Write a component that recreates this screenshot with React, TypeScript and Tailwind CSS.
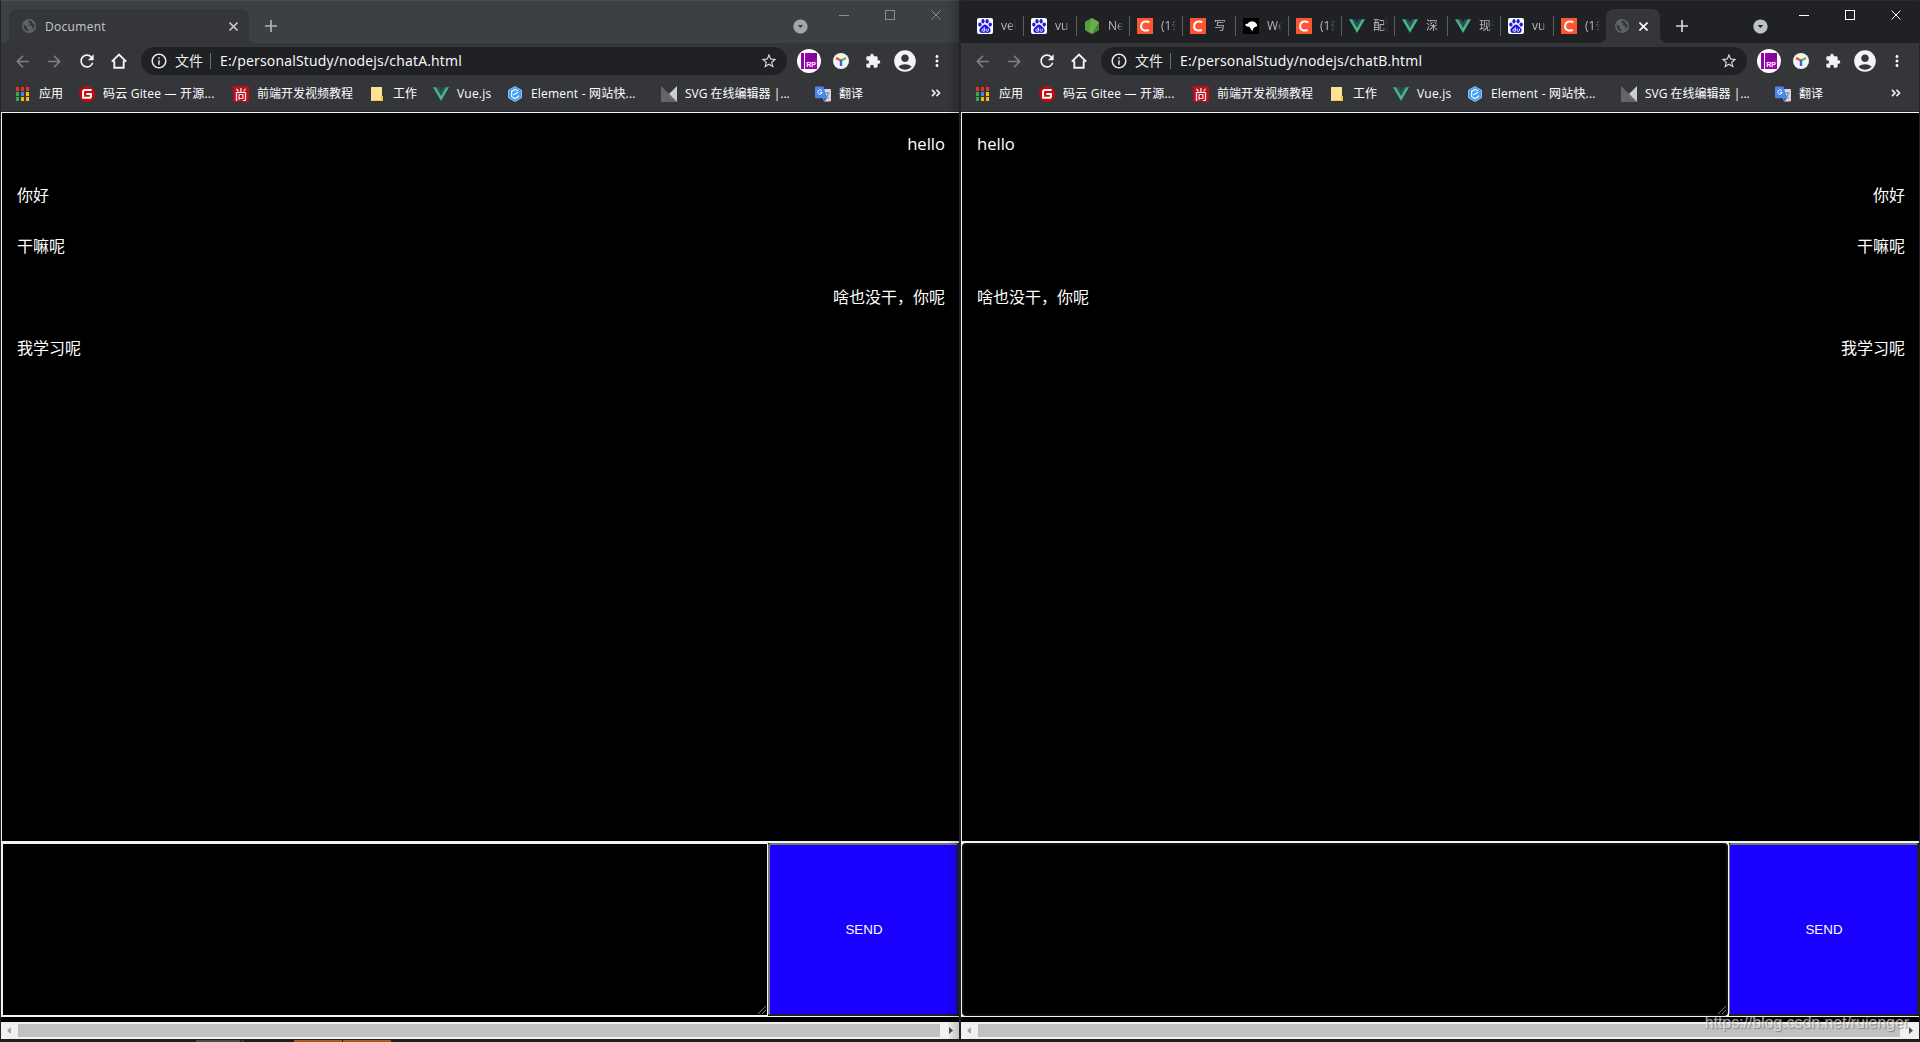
import type { ReactNode } from "react"
import {
  MdAccountCircle,
  MdArrowBack,
  MdArrowDropDownCircle,
  MdArrowForward,
  MdExtension,
  MdInfoOutline,
  MdMoreVert,
  MdRefresh,
  MdStarBorder,
} from "react-icons/md"

type Message = { text: string; from: "A" | "B" }

const messages: Message[] = [
  { text: "hello", from: "A" },
  { text: "你好", from: "B" },
  { text: "干嘛呢", from: "B" },
  { text: "啥也没干，你呢", from: "A" },
  { text: "我学习呢", from: "B" },
]

/* ---------- Icons ---------- */

function GlobeIcon() {
  return (
    <svg viewBox="0 0 14 14" className="w-3.5 h-3.5 shrink-0">
      <circle cx="7" cy="7" r="7" fill="#5f6368" />
      <path d="M1.600 5.500 4 7l1.200 1-.4 1.800 2 .7-.6 1.800C3.500 12 1.500 9.500 1.600 5.500zM7 1.800l-.6 1.500 1.600.9L7.500 6l2 .8 1.200 1.700L9.300 10.800l3-2.400.2-3.200L10.300 4 9.500 2z" fill="#35363a" />
    </svg>
  )
}

function AppsIcon() {
  const colors = ["#ee3124", "#ee3124", "#ee3124", "#35a853", "#4285f4", "#fbbc05", "#35a853", "#fbbc05", "#fbbc05"]
  return (
    <svg viewBox="0 0 16 16" className="w-4 h-4 shrink-0">
      {colors.map((c, i) => (
        <rect key={i} x={1 + (i % 3) * 5} y={1 + Math.floor(i / 3) * 5} width="3" height="4" fill={c} />
      ))}
    </svg>
  )
}

function GiteeIcon() {
  return (
    <svg viewBox="0 0 16 16" className="w-4 h-4 shrink-0">
      <circle cx="8" cy="8" r="8" fill="#c9060b" />
      <path d="M12.500 4.100H6a1.900 1.900 0 0 0-1.900 1.900v5.800H10a1.900 1.900 0 0 0 1.900-1.900V8H7.300" fill="none" stroke="#fff" strokeWidth="2" />
    </svg>
  )
}

function ShangIcon() {
  return (
    <span className="flex w-4 h-4 shrink-0 items-center justify-center bg-[#b8101c] text-[13px] leading-none text-white">尚</span>
  )
}

function FolderIcon() {
  return (
    <svg viewBox="0 0 16 16" className="w-4 h-4 shrink-0">
      <path d="M2 1h11v9h1v5H2z" fill="#fde293" />
      <path d="M2 14h10v1H2zM12 10h2v5h-2z" fill="#f0c64a" />
    </svg>
  )
}

function VueIcon() {
  return (
    <svg viewBox="0 0 16 16" className="w-4 h-4 shrink-0">
      <path d="M0 1.200h3.200L8 9.500l4.800-8.300H16L8 15z" fill="#41b883" />
      <path d="M3.200 1.200h3L8 4.300l1.800-3.100h3L8 9.500z" fill="#35495e" />
    </svg>
  )
}

function ElementIcon() {
  return (
    <svg viewBox="0 0 16 16" className="w-4 h-4 shrink-0">
      <path d="M8 .5 14.500 4.200v7.600L8 15.500 1.500 11.800V4.200z" fill="#409eff" stroke="#a9d3ff" strokeWidth=".8" />
      <path d="M11.300 5 8.200 3.300 4.600 5.400v5.200L8 12.600l3.500-2V9.200" fill="none" stroke="#fff" strokeWidth="1.100" />
      <path d="M6.200 8.900 11.400 6" stroke="#fff" strokeWidth="1.200" />
    </svg>
  )
}

function SvgEditorIcon() {
  return (
    <svg viewBox="0 0 16 16" className="w-4 h-4 shrink-0">
      <path d="M0 0l16 16H0z" fill="#666" />
      <path d="M16 0v16L8 8z" fill="#ccc" />
    </svg>
  )
}

function TranslateIcon() {
  return (
    <svg viewBox="0 0 16 16" className="w-4 h-4 shrink-0">
      <path d="M6 3h9a1 1 0 0 1 1 1v10.500a1 1 0 0 1-1 1H9z" fill="#d5d8dc" />
      <path d="M9.500 7h5M12 6v1m1.500 0c-.5 2.500-2 4.500-3.500 5.500M10.500 8.500c.7 1.700 2 3 3.500 4" stroke="#607d8b" strokeWidth=".9" fill="none" />
      <path d="M1 .5h7.500l3.500 11.800H1a1 1 0 0 1-1-1V1.500a1 1 0 0 1 1-1z" fill="#4a86f0" />
      <path d="M8.500 12.300H12L9.500 15.500z" fill="#2f5fc4" />
      <path d="M6.800 4.700a2.200 2.200 0 1 0 .4 1.700H5.200" stroke="#fff" strokeWidth="1" fill="none" />
    </svg>
  )
}

function BaiduIcon() {
  return (
    <svg viewBox="0 0 16 16" className="w-4 h-4 shrink-0">
      <rect width="16" height="16" rx="2" fill="#fff" />
      <g fill="#2319dc">
        <ellipse cx="2.900" cy="6.600" rx="1.700" ry="2.100" />
        <ellipse cx="6" cy="3.200" rx="1.600" ry="2.200" />
        <ellipse cx="10.100" cy="3.200" rx="1.600" ry="2.200" />
        <ellipse cx="13.200" cy="6.600" rx="1.700" ry="2.100" />
        <path d="M8 6.500c1.800 0 2.500 1.500 3.700 2.600 1.400 1.300 2.100 2.300 1.900 3.700-.2 1.700-1.600 2.300-3 2.200-1-.1-1.700-.3-2.600-.3s-1.600.2-2.600.3c-1.400.1-2.800-.5-3-2.200-.2-1.400.5-2.400 1.900-3.700C5.500 8 6.200 6.500 8 6.500z" />
      </g>
      <path d="M7.300 9.200v4.300M7.300 11.800a1.200 1.200 0 1 0 0 .8M9.200 10.700v1.900q0 .7 1 .7t1.200-.7v-1.900" fill="none" stroke="#fff" strokeWidth=".9" />
    </svg>
  )
}

function CsdnIcon() {
  return (
    <svg viewBox="0 0 16 16" className="w-4 h-4 shrink-0">
      <path d="M0 0h16v16H0z" fill="#fc5531" />
      <path d="M12.300 4.300C9.500 2.700 4.600 3 4.100 7.900c-.4 4.500 4 5.500 7.600 4.100" fill="none" stroke="#fff" strokeWidth="2" />
    </svg>
  )
}

function NodeIcon() {
  return (
    <svg viewBox="0 0 16 16" className="w-4 h-4 shrink-0">
      <path d="M8 0l7 4v8l-7 4-7-4V4z" fill="#6cae4a" />
      <path d="M1 4l5 11-5-3zM8 0 1 4l4 8z" fill="#539e43" />
      <path d="M15 4v8l-7 4z" fill="#3e863d" />
    </svg>
  )
}

function BirdIcon() {
  return (
    <svg viewBox="0 0 16 16" className="w-4 h-4 shrink-0">
      <path d="M0 0h16v16H0z" fill="#000" />
      <path d="M2 7c1-1 2-1.300 3-1.500C6 3.500 9 3 11.500 4c2 .8 2.500 2.500 2.800 4L12.500 8.800 10.500 10l-.8 3L8 11.500 6.500 8.800 4 8.500z" fill="#fff" />
    </svg>
  )
}

function HomeIcon() {
  return (
    <svg viewBox="0 0 16 16" className="w-4 h-4 shrink-0">
      <path d="M.8 8.600 8 1.600l7.200 7M3.300 7.500v7.300h9.400V7.500" fill="none" stroke="#f1f3f4" strokeWidth="1.900" />
    </svg>
  )
}

function AxureIcon() {
  return (
    <svg viewBox="0 0 24 24" className="w-6 h-6 shrink-0">
      <circle cx="12" cy="12" r="12" fill="#fff" />
      <path d="M4 4h3v16H4z" fill="#8a0aa0" />
      <path d="M8 4h12v16H8z" fill="#a400b8" />
      <path d="M8 10l7-6h5v5l-6 3z" fill="#7d0a96" />
      <text x="9.300" y="18.300" fontSize="7" fontWeight="700" fill="#fff" fontFamily="Liberation Sans, sans-serif">RP</text>
    </svg>
  )
}

function YIcon() {
  return (
    <svg viewBox="0 0 16 16" className="w-4 h-4 shrink-0">
      <circle cx="8" cy="8" r="8" fill="#f4f4f4" />
      <path d="M8 7.500 3 5" stroke="#ff4a12" strokeWidth="2.400" />
      <path d="M8 7.500 13 5" stroke="#5ac62c" strokeWidth="2.400" />
      <path d="M8 7v6" stroke="#2c5fff" strokeWidth="2.400" />
    </svg>
  )
}

function Cross({ className, size, width = 1 }: { className: string; size: number; width?: number }) {
  return (
    <svg viewBox="0 0 10 10" width={size} height={size} className={`shrink-0 ${className}`}>
      <path d="M.5 .5l9 9M9.500 .5l-9 9" stroke="currentColor" strokeWidth={width} />
    </svg>
  )
}

/* ---------- Data ---------- */

const bookmarks: { label: string; icon: ReactNode; width: string }[] = [
  { label: "应用", icon: <AppsIcon />, width: "w-16" },
  { label: "码云 Gitee — 开源...", icon: <GiteeIcon />, width: "w-[154px] tracking-[0.2px]" },
  { label: "前端开发视频教程", icon: <ShangIcon />, width: "w-[136px]" },
  { label: "工作", icon: <FolderIcon />, width: "w-16" },
  { label: "Vue.js", icon: <VueIcon />, width: "w-[74px] tracking-[0.2px]" },
  { label: "Element - 网站快...", icon: <ElementIcon />, width: "w-[154px] tracking-[0.2px]" },
  { label: "SVG 在线编辑器 |...", icon: <SvgEditorIcon />, width: "w-[154px]" },
  { label: "翻译", icon: <TranslateIcon />, width: "w-[60px]" },
]

const backgroundTabs = [
  { title: "vel", icon: <BaiduIcon /> },
  { title: "vu", icon: <BaiduIcon /> },
  { title: "Ne", icon: <NodeIcon /> },
  { title: "(1条", icon: <CsdnIcon /> },
  { title: "写", icon: <CsdnIcon /> },
  { title: "We", icon: <BirdIcon /> },
  { title: "(1条", icon: <CsdnIcon /> },
  { title: "配置", icon: <VueIcon /> },
  { title: "深", icon: <VueIcon /> },
  { title: "现有", icon: <VueIcon /> },
  { title: "vu", icon: <BaiduIcon /> },
  { title: "(1条", icon: <CsdnIcon /> },
]

/* ---------- Browser chrome ---------- */

function ActiveTab({ title }: { title?: string }) {
  return (
    <div
      className={`relative flex h-[34px] items-center rounded-t-lg bg-[#35363a] ${title ? "w-60 pl-[13px] pr-[11px]" : "w-[54px] pl-[9px] pr-3"}`}
    >
      <span className="absolute -left-2 bottom-0 w-2 h-2 bg-[radial-gradient(circle_at_0_0,transparent_8px,#35363a_8.5px)]" />
      <span className="absolute -right-2 bottom-0 w-2 h-2 bg-[radial-gradient(circle_at_100%_0,transparent_8px,#35363a_8.5px)]" />
      <GlobeIcon />
      {title && <span className="ml-[9px] pt-px text-xs tracking-[0.3px] text-[#c6c8ca]">{title}</span>}
      <Cross size={9} width={1.8} className={`ml-auto ${title ? "text-[#c0c2c4]" : "text-white"}`} />
    </div>
  )
}

function TabStrip({ id }: { id: "A" | "B" }) {
  const focused = id === "B"
  return (
    <div
      className={`relative flex h-[43px] items-end border-t pl-2 ${focused ? "border-[#2b2c29] bg-[#202124]" : "border-[#4b4f51] bg-[#3c4043]"}`}
    >
      {focused && (
        <div className="grid h-[34px] grid-cols-[54px_repeat(11,53px)]">
          {backgroundTabs.map((tab, i) => (
            <div key={i} className="flex items-center">
              <span className={`mr-[7px] h-5 w-px ${i > 0 ? "bg-[#5b5e62]" : ""}`} />
              {tab.icon}
              <span className="ml-2 w-[15px] overflow-hidden whitespace-nowrap text-xs text-[#b8bbbf] [mask-image:linear-gradient(to_right,#000_60%,transparent)]">
                {tab.title}
              </span>
            </div>
          ))}
        </div>
      )}
      <ActiveTab title={focused ? undefined : "Document"} />
      <svg viewBox="0 0 12 12" className={`mb-[11px] ml-4 h-3 w-3 ${focused ? "text-[#d5d7da]" : "text-[#b1b3b5]"}`}>
        <path d="M6 0v12M0 6h12" stroke="currentColor" strokeWidth="1.700" />
      </svg>
      <MdArrowDropDownCircle className={`mb-2 ml-auto h-[17px] w-[17px] ${focused ? "text-[#bdc0c4]" : "text-[#a4a7aa]"}`} />
      {/* Window buttons */}
      <div className={`ml-[30px] mr-[18px] flex items-center self-start pt-2.5 -mt-px ${focused ? "text-white" : "text-[#8d8f91]"}`}>
        <span className="h-px w-2.5 bg-current" />
        <span className="ml-9 h-2.5 w-2.5 border border-current" />
        <Cross size={10} className="ml-9" />
      </div>
    </div>
  )
}

function Toolbar({ url }: { url: string }) {
  return (
    <div className="flex h-9 items-center">
      <MdArrowBack className="ml-3 h-[19px] w-[19px] text-[#7f8184]" />
      <MdArrowForward className="ml-[13px] h-[19px] w-[19px] text-[#7f8184]" />
      <MdRefresh className="ml-[13px] h-5 w-5 text-[#f1f3f4]" />
      <span className="ml-3.5">
        <HomeIcon />
      </span>
      <div className="ml-3.5 flex h-7 w-[646px] items-center rounded-full bg-[#202124] px-[9px]">
        <MdInfoOutline className="h-[18px] w-[18px] text-[#e8eaed]" />
        <span className="ml-[7px] text-sm text-[#e8eaed]">文件</span>
        <span className="ml-[7px] h-4 w-px bg-[#6b6e72]" />
        <span className="ml-[9px] text-sm tracking-[0.2px] text-white">{url}</span>
        <MdStarBorder className="ml-auto h-[18px] w-[18px] text-[#d5d7da]" />
      </div>
      <span className="ml-2.5">
        <AxureIcon />
      </span>
      <span className="ml-3">
        <YIcon />
      </span>
      <MdExtension className="ml-4 h-4 w-4 text-[#f1f3f4]" />
      <MdAccountCircle className="ml-[11px] h-[26px] w-[26px] text-[#f1f3f4]" />
      <MdMoreVert className="ml-2.5 h-[18px] w-[18px] text-[#f1f3f4]" />
    </div>
  )
}

function BookmarkBar() {
  return (
    <div className="flex h-8 items-center pb-0.5 pl-3.5">
      {bookmarks.map((item) => (
        <div key={item.label} className={`flex shrink-0 items-center gap-2 ${item.width}`}>
          {item.icon}
          <span className="whitespace-nowrap text-xs text-white">{item.label}</span>
        </div>
      ))}
      <svg viewBox="0 0 10 8" className="ml-auto mr-[18px] mb-0.5 h-2 w-2.5 text-[#e8eaed]">
        <path d="M1 .8 4 4 1 7.200M5.500 .8 8.500 4l-3 3.200" fill="none" stroke="currentColor" strokeWidth="1.700" />
      </svg>
    </div>
  )
}

/* ---------- Chat page ---------- */

function ChatPage({ user }: { user: "A" | "B" }) {
  const focused = user === "A"
  return (
    <div className="flex flex-1 flex-col bg-black">
      <div className="h-[730px] border-y border-l border-[#f3f3f3] pl-[15px] pr-3.5 pt-1.5">
        {messages.map((m) => (
          <p
            key={m.text}
            className={`h-[51px] text-white ${m.from === user ? "text-right" : "text-left"} ${m.text === "hello" ? "text-[16.6px] leading-[49px]" : "text-base leading-[51px]"}`}
          >
            {m.text}
          </p>
        ))}
      </div>
      <div className="flex h-[175px] border-y border-l border-[#f3f3f3]">
        <div className={`relative ${focused ? "w-[766px] border border-[#f3f3f3]" : "w-[767px] bg-[#f3f3f3] pr-px"}`}>
          {!focused && <div className="h-full w-full rounded-[4px] border-2 border-[#101010] bg-black" />}
          <svg viewBox="0 0 8 8" className={`absolute h-2 w-2 ${focused ? "bottom-px right-px" : "bottom-0.5 right-[3px]"}`}>
            <path d="M0 8l8-8M4 8l4-4" stroke="#8a8a8a" strokeWidth=".9" />
          </svg>
        </div>
        <button
          type="button"
          className={`flex-1 rounded-[3px] border-2 border-b-[#222] border-l-[#767676] border-r-[#222] border-t-[#767676] bg-[#1a00ff] pl-px font-['Liberation_Sans',Arial,sans-serif] text-[13.333px] text-white ${focused ? "" : "border-l"}`}
        >
          SEND
        </button>
      </div>
    </div>
  )
}

function ScrollBar() {
  return (
    <div className="flex h-[17px] items-center bg-[#f1f1f1]">
      <svg viewBox="0 0 17 17" className="h-[17px] w-[17px]">
        <path d="M10 5v7L6 8.500z" fill="#a3a3a3" />
      </svg>
      <div className="h-[13px] flex-1 bg-[#c1c1c1]" />
      <svg viewBox="0 0 17 17" className="ml-0.5 h-[17px] w-[17px]">
        <path d="M7 5v7l4-3.500z" fill="#505050" />
      </svg>
    </div>
  )
}

function BrowserWindow({ id }: { id: "A" | "B" }) {
  return (
    <section className="relative flex h-[1039px] w-[958px] flex-col overflow-hidden bg-black">
      <TabStrip id={id} />
      <div className="bg-[#35363a]">
        <Toolbar url={`E:/personalStudy/nodejs/chat${id}.html`} />
        <BookmarkBar />
        <div className="h-px bg-[#28292c]" />
      </div>
      <ChatPage user={id} />
      <ScrollBar />
      {id === "A" && (
        <div className="pointer-events-none absolute inset-y-0 right-0 w-3 bg-gradient-to-r from-transparent to-black/20" />
      )}
    </section>
  )
}

export default function App() {
  return (
    <main className="relative h-[1042px] w-[1920px] overflow-hidden bg-[#22212c] font-['Open_Sans','Noto_Sans_CJK_SC',sans-serif]">
      <div className="flex gap-0.5 pl-px">
        <BrowserWindow id="A" />
        <BrowserWindow id="B" />
      </div>
      {/* Top edge of the taskbar */}
      <div className="flex h-[3px] items-end bg-[#1f1d20] pl-[196px]">
        <span className="h-0.5 w-11 bg-[#4a4a4b]" />
        <span className="ml-px h-0.5 w-[3px] bg-[#3a3a3b]" />
        <span className="ml-[50px] h-0.5 w-12 bg-[#a85c20]" />
        <span className="ml-px h-0.5 w-12 bg-[#a85c20]" />
      </div>
      <span className="absolute bottom-[9px] right-[11px] font-['Liberation_Sans',Arial,sans-serif] text-base leading-5 tracking-[-0.07px] text-white/60 [text-shadow:1px_1px_1px_rgba(90,90,90,0.6)]">
        https://blog.csdn.net/ruienger
      </span>
    </main>
  )
}
